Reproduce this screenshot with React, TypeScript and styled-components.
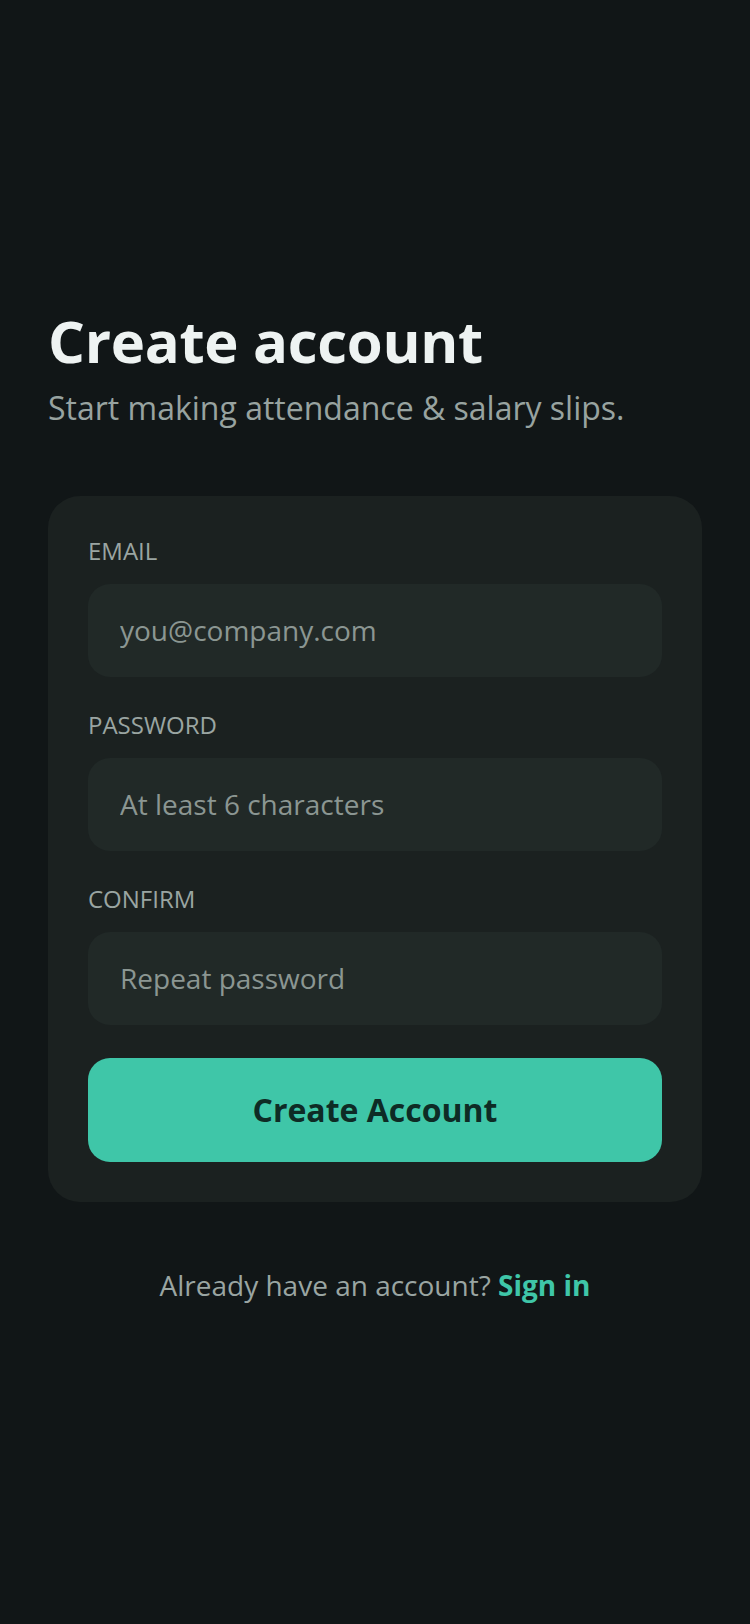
import React from "react";
import styled, { createGlobalStyle } from "styled-components";

const GlobalStyle = createGlobalStyle`
  html, body {
    margin: 0;
    padding: 0;
    background: #111617;
  }
  body {
    font-family: "Open Sans", "Noto Sans", sans-serif;
    -webkit-font-smoothing: antialiased;
  }
  * { box-sizing: border-box; }
`;

const Page = styled.main`
  min-height: 100vh;
  padding: 306px 48px 80px;
  display: flex;
  flex-direction: column;
`;

const Title = styled.h1`
  margin: 0;
  font-size: 58px;
  line-height: 1.2;
  font-weight: 700;
  color: #eef3f2;
  letter-spacing: -0.3px;
`;

const Subtitle = styled.p`
  margin: 12px 0 0;
  font-size: 32px;
  line-height: 39px;
  font-weight: 400;
  color: #98a3a0;
`;

const Card = styled.form`
  margin-top: 69px;
  padding: 40px;
  border-radius: 32px;
  background: #1b2120;
  display: flex;
  flex-direction: column;
  gap: 33px;
`;

const Field = styled.label`
  display: flex;
  flex-direction: column;
  gap: 19px;
`;

const FieldLabel = styled.span`
  font-size: 24px;
  line-height: 29px;
  color: #9aa5a2;
  text-transform: uppercase;
`;

const Input = styled.input`
  height: 93px;
  width: 100%;
  border: none;
  outline: none;
  border-radius: 22px;
  background: #212927;
  padding: 0 32px;
  font-family: "Open Sans", "Noto Sans", sans-serif;
  font-size: 28px;
  color: #e6ecea;
  &::placeholder {
    color: #8b9692;
    opacity: 1;
  }
`;

const SubmitButton = styled.button`
  height: 104px;
  border: none;
  border-radius: 22px;
  background: #3fc6a8;
  color: #0e2b25;
  font-family: "Open Sans", "Noto Sans", sans-serif;
  font-size: 32px;
  font-weight: 700;
  cursor: pointer;
`;

const Footer = styled.p`
  margin: 64px 0 0;
  text-align: center;
  font-size: 28px;
  line-height: 38px;
  color: #9aa5a2;
`;

const FooterLink = styled.a`
  color: #3fc6a8;
  font-weight: 700;
  text-decoration: none;
`;

const fields = [
  { label: "Email", type: "email", placeholder: "you@company.com" },
  { label: "Password", type: "password", placeholder: "At least 6 characters" },
  { label: "Confirm", type: "password", placeholder: "Repeat password" },
];

export default function App() {
  return (
    <>
      <GlobalStyle />
      <Page>
        <Title>Create account</Title>
        <Subtitle>Start making attendance &amp; salary slips.</Subtitle>
        <Card onSubmit={(e) => e.preventDefault()}>
          {fields.map((f) => (
            <Field key={f.label}>
              <FieldLabel>{f.label}</FieldLabel>
              <Input type={f.type} placeholder={f.placeholder} />
            </Field>
          ))}
          <SubmitButton type="submit">Create Account</SubmitButton>
        </Card>
        <Footer>
          Already have an account? <FooterLink href="#">Sign in</FooterLink>
        </Footer>
      </Page>
    </>
  );
}
